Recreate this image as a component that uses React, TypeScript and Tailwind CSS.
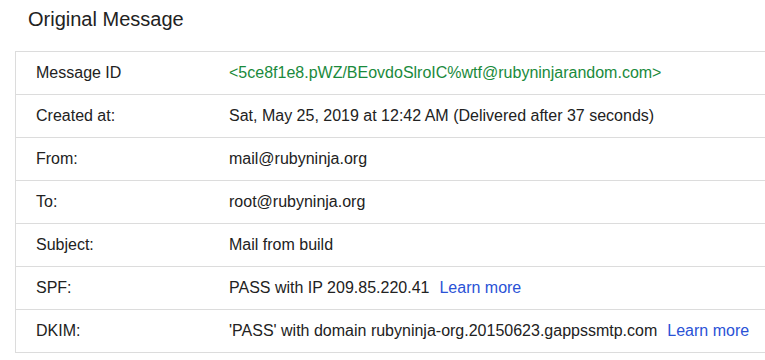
import React from 'react';

type Row = {
  label: string;
  value: string;
  green?: boolean;
  link?: boolean;
};

const rows: Row[] = [
  { label: 'Message ID', value: '<5ce8f1e8.pWZ/BEovdoSlroIC%wtf@rubyninjarandom.com>', green: true },
  { label: 'Created at:', value: 'Sat, May 25, 2019 at 12:42 AM (Delivered after 37 seconds)' },
  { label: 'From:', value: 'mail@rubyninja.org' },
  { label: 'To:', value: 'root@rubyninja.org' },
  { label: 'Subject:', value: 'Mail from build' },
  { label: 'SPF:', value: 'PASS with IP 209.85.220.41', link: true },
  { label: 'DKIM:', value: "'PASS' with domain rubyninja-org.20150623.gappssmtp.com", link: true },
];

const App = () => {
  return (
    <div className="w-[765px] h-[360px] overflow-hidden bg-white text-[#202124] font-['Liberation_Sans',Arial,sans-serif]">
      {/* Titulo */}
      <h1 className="pl-[28px] pt-[9px] text-[20px] leading-5 font-normal text-[#222]">Original Message</h1>

      {/* Tabela de cabecalhos */}
      <div className="ml-[15px] mt-[22px] w-[780px] border-t border-l border-[#dcdcdc]">
        {rows.map((row) => (
          <div key={row.label} className="flex h-[43px] items-center border-b border-[#dcdcdc] text-[16px]">
            <div className="w-[193px] shrink-0 pl-[20px] text-[#222]">{row.label}</div>
            <div className={'pl-[20px] whitespace-nowrap ' + (row.green ? 'text-[#1a8a3c]' : 'text-[#222]')}>
              {row.value}
              {row.link && <span className="ml-[10px] text-[#2a52d6]">Learn more</span>}
            </div>
          </div>
        ))}
      </div>
    </div>
  );
};

export default App;
